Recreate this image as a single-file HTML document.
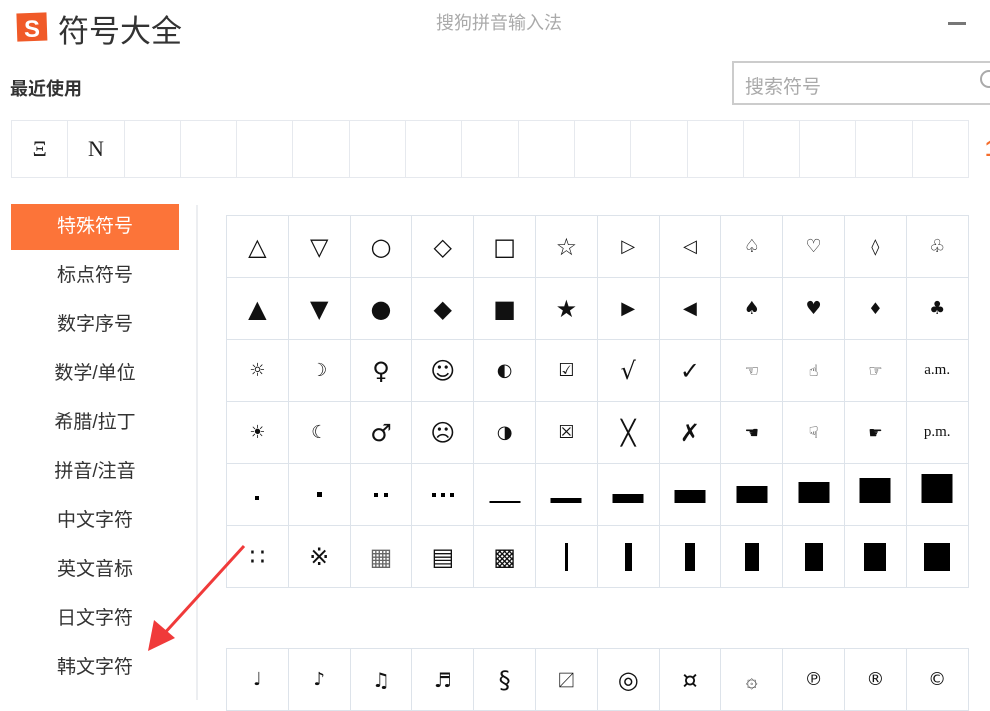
<!DOCTYPE html>
<html><head><meta charset="utf-8"><style>
body{margin:0;width:990px;height:700px;overflow:hidden;background:#fff;font-family:"Liberation Sans","Noto Sans CJK SC",sans-serif;position:relative}
.a{position:absolute}
.recent{left:11px;top:120px;display:flex;border:1px solid #e6e9ee;border-right:none}
.recent div{width:55.3px;height:56px;border-right:1px solid #e6e9ee;font:22px "Liberation Serif",serif;display:flex;align-items:center;justify-content:center;color:#222}
.grid{position:absolute;left:226px;display:grid;grid-template-columns:repeat(12,61.8px);grid-auto-rows:62px;border-left:1px solid #dde3ea;border-top:1px solid #dde3ea}
.grid div{border-right:1px solid #dde3ea;border-bottom:1px solid #dde3ea;display:flex;align-items:center;justify-content:center;font-size:24px;color:#111;font-family:"DejaVu Sans",sans-serif;position:relative;box-sizing:border-box}
.side div{height:49px;line-height:49px;text-align:center;font-size:19px;color:#333;width:168px}
.b{display:inline-block;background:#000}
.bb{position:absolute;bottom:22px;left:50%;transform:translateX(-50%);background:#000;width:31px}
.s18{font-size:18px!important}.s16{font-size:16px!important}
</style></head><body>
<svg class="a" style="left:12px;top:10px" width="40" height="36" viewBox="0 0 40 36"><path d="M6 2 L36 4 L34 32 L4 30 Z" fill="#f05a28" transform="rotate(-6 20 18)"/><text x="20" y="27" font-size="24" font-weight="bold" fill="#fff" text-anchor="middle" font-family="Liberation Sans">S</text></svg>
<div class="a" style="left:58px;top:6px;font-size:31px;color:#333">符号大全</div>
<div class="a" style="left:436px;top:9px;font-size:18px;color:#aaa">搜狗拼音输入法</div>
<div class="a" style="left:948px;top:22px;width:18px;height:3px;background:#777"></div>
<div class="a" style="left:10px;top:75px;font-size:18px;font-weight:bold;color:#333">最近使用</div>
<div class="a" style="left:732px;top:61px;width:270px;height:44px;border:2px solid #ccc;box-sizing:border-box"></div>
<div class="a" style="left:745px;top:72px;font-size:19px;color:#aaa">搜索符号</div>
<div class="a" style="left:980px;top:70px;width:14px;height:14px;border:2px solid #aaa;border-radius:50%"></div>
<div class="a recent"><div>Ξ</div><div>N</div><div></div><div></div><div></div><div></div><div></div><div></div><div></div><div></div><div></div><div></div><div></div><div></div><div></div><div></div><div></div></div>
<div class="a" style="left:985px;top:136px;font-size:22px;color:#f56d2b;font-weight:bold">1</div>
<div class="a" style="left:11px;top:204px;width:168px;height:46px;background:#fc7439"></div>
<div class="a side" style="left:11px;top:202px">
<div style="color:#fff">特殊符号</div><div>标点符号</div><div>数字序号</div><div>数学/单位</div><div>希腊/拉丁</div><div>拼音/注音</div><div>中文字符</div><div>英文音标</div><div>日文字符</div><div>韩文字符</div></div>
<div class="a" style="left:196px;top:205px;width:2px;height:495px;background:#eceef1"></div>
<div class="grid" style="top:215px">
<div>△</div><div>▽</div><div>○</div><div>◇</div><div>□</div><div>☆</div><div class="s18">▷</div><div class="s18">◁</div><div class="s18">♤</div><div class="s18">♡</div><div class="s16">◊</div><div class="s18">♧</div>
<div>▲</div><div>▼</div><div>●</div><div>◆</div><div>■</div><div>★</div><div class="s18">▶</div><div class="s18">◀</div><div class="s18">♠</div><div class="s18">♥</div><div class="s16">♦</div><div class="s18">♣</div>
<div class="s18">☼</div><div class="s18">☽</div><div>♀</div><div>☺</div><div class="s18">◐</div><div class="s18">☑</div><div>√</div><div>✓</div><div class="s16">☜</div><div class="s16">☝</div><div class="s16">☞</div><div style="font-size:15px;font-family:'Liberation Serif'">a.m.</div>
<div class="s18">☀</div><div class="s18">☾</div><div>♂</div><div>☹</div><div class="s18">◑</div><div class="s18">☒</div><div>╳</div><div>✗</div><div class="s16">☚</div><div class="s16">☟</div><div class="s16">☛</div><div style="font-size:15px;font-family:'Liberation Serif'">p.m.</div>
<div><span class="b" style="width:4px;height:4px;margin-top:6px"></span></div><div><span class="b" style="width:5px;height:5px"></span></div><div><span class="b" style="width:4px;height:4px;margin-right:6px"></span><span class="b" style="width:4px;height:4px"></span></div><div><span class="b" style="width:4px;height:4px;margin-right:5px"></span><span class="b" style="width:4px;height:4px;margin-right:5px"></span><span class="b" style="width:4px;height:4px"></span></div>
<div><span class="bb" style="height:2px"></span></div><div><span class="bb" style="height:5px"></span></div><div><span class="bb" style="height:9px"></span></div><div><span class="bb" style="height:13px"></span></div><div><span class="bb" style="height:17px"></span></div><div><span class="bb" style="height:21px"></span></div><div><span class="bb" style="height:25px"></span></div><div><span class="bb" style="height:29px"></span></div>
<div>∷</div><div>※</div><div style="color:#666">▦</div><div>▤</div><div>▩</div><div><span class="b" style="width:3px;height:28px"></span></div><div><span class="b" style="width:7px;height:28px"></span></div><div><span class="b" style="width:10px;height:28px"></span></div><div><span class="b" style="width:14px;height:28px"></span></div><div><span class="b" style="width:18px;height:28px"></span></div><div><span class="b" style="width:22px;height:28px"></span></div><div><span class="b" style="width:26px;height:28px"></span></div>
</div>
<div class="grid" style="top:648px">
<div class="s18">♩</div><div class="s18">♪</div><div style="font-size:20px">♫</div><div style="font-size:20px">♬</div><div>§</div><div class="s18">〼</div><div>◎</div><div>¤</div><div style="font-size:20px">۞</div><div class="s18">℗</div><div class="s18">®</div><div class="s18">©</div>
</div>
<svg class="a" style="left:0;top:0" width="990" height="700"><line x1="244" y1="546" x2="162" y2="636" stroke="#f03a3a" stroke-width="3"/><path d="M148 651 L154 620 L175 638 Z" fill="#f03a3a"/></svg>
</body></html>
